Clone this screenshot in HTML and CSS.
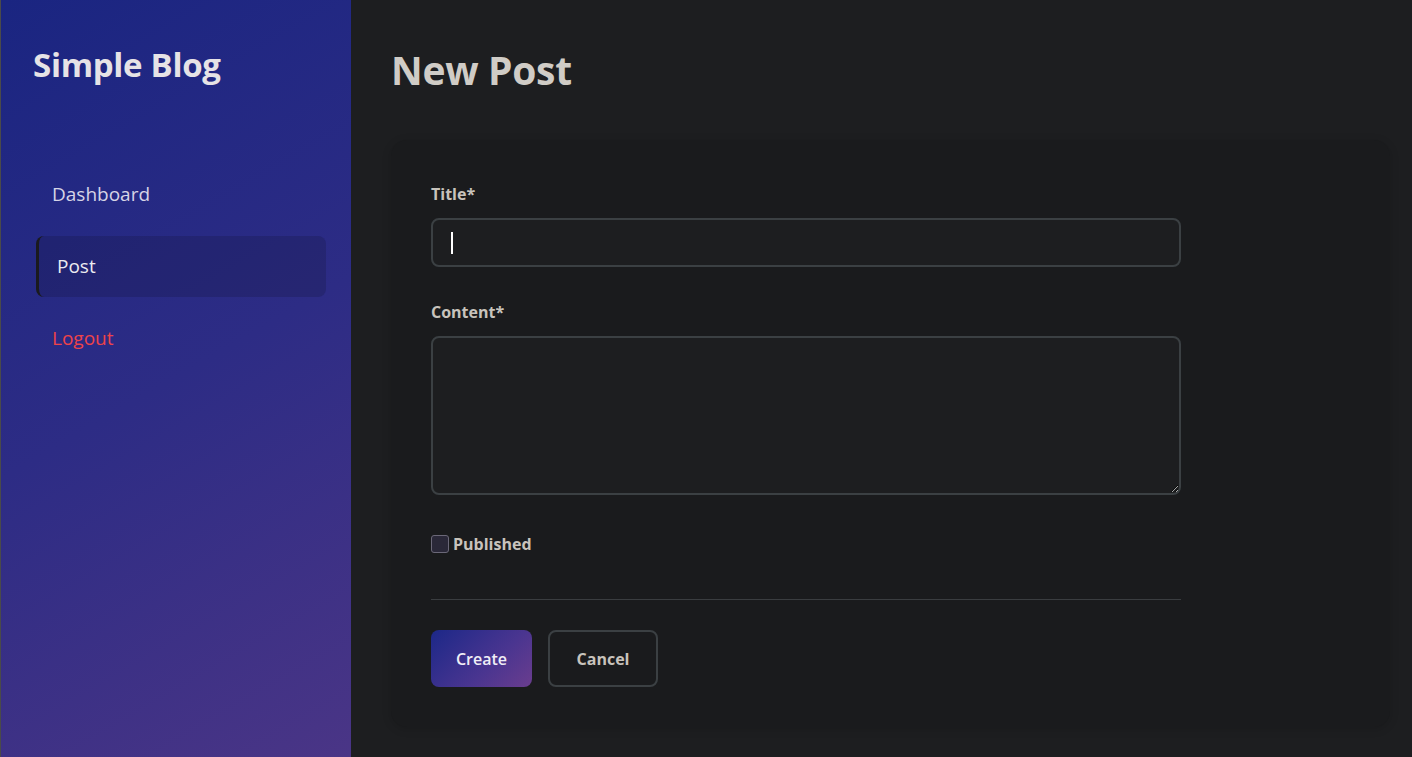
FILE: index.html
```html
<!DOCTYPE html>
<html lang="en">
<head>
<meta charset="utf-8">
<title>Simple Blog - New Post</title>
<link rel="stylesheet" href="styles.css">
</head>
<body>
<div class="app">
  <aside class="sidebar">
    <h1 class="brand">Simple Blog</h1>
    <nav class="nav">
      <a class="nav-item" href="#">Dashboard</a>
      <a class="nav-item active" href="#">Post</a>
      <a class="nav-item logout" href="#">Logout</a>
    </nav>
  </aside>
  <main class="main">
    <h2 class="page-title">New Post</h2>
    <section class="card">
      <form class="form">
        <div class="field">
          <label class="label" for="title">Title*</label>
          <input class="input input-focused" id="title" type="text" autofocus>
        </div>
        <div class="field">
          <label class="label" for="content">Content*</label>
          <textarea class="input textarea" id="content"></textarea>
        </div>
        <div class="check-row">
          <input class="checkbox" id="published" type="checkbox">
          <label class="label check-label" for="published">Published</label>
        </div>
        <div class="actions">
          <button class="btn btn-primary" type="button">Create</button>
          <button class="btn btn-outline" type="button">Cancel</button>
        </div>
      </form>
    </section>
  </main>
</div>
</body>
</html>
```
FILE: styles.css
```css
* { box-sizing: border-box; }
html, body { height: 100%; }
body {
  margin: 0;
  background: #1d1e20;
  font-family: "Open Sans", "Noto Sans", sans-serif;
  color: #d0ccc6;
}
.app {
  display: flex;
  min-height: 100vh;
}
.sidebar {
  width: 351px;
  flex-shrink: 0;
  border-left: 1px solid #4a4a4a;
  background: linear-gradient(150deg, #1a2581 0%, #2d2c85 50%, #4a3586 100%);
  padding: 40px 25px 0 35px;
}
.brand {
  margin: 0 0 0 -3px;
  font-size: 33px;
  line-height: 50px;
  font-weight: 700;
  color: #e6e3e6;
  letter-spacing: -0.3px;
}
.nav {
  display: flex;
  flex-direction: column;
  gap: 11px;
  margin-top: 74px;
}
.nav-item {
  display: block;
  height: 61px;
  line-height: 61px;
  padding: 0 16px;
  border-radius: 8px;
  font-size: 19px;
  font-weight: 500;
  color: #d6d4e6;
  text-decoration: none;
}
.nav-item.active {
  background: rgba(20, 20, 60, 0.25);
  border-left: 3px solid #1a1a1e;
  padding-left: 18px;
  color: #ecebf0;
}
.nav-item.logout { color: #ee4349; }

.main {
  flex: 1;
  padding: 40px 22px 27px 40px;
}
.page-title {
  margin: 0 0 40px;
  font-size: 39px;
  line-height: 60px;
  font-weight: 700;
  color: #d0ccc6;
  letter-spacing: -0.3px;
}
.card {
  max-width: 1000px;
  background: #1a1b1d;
  border-radius: 16px;
  padding: 42px 40px 40px;
  box-shadow: 0 2px 10px rgba(0,0,0,0.15);
}
.form {
  max-width: 750px;
  display: flex;
  flex-direction: column;
}
.field {
  display: flex;
  flex-direction: column;
  margin-bottom: 33px;
}
.label {
  font-size: 16px;
  font-weight: 700;
  color: #c8c3bc;
  line-height: 24px;
  margin-bottom: 12px;
}
.input {
  display: block;
  width: 100%;
  height: 49px;
  background: #1d1e20;
  border: 2px solid #3b4043;
  border-radius: 8px;
  padding: 0 18px;
  font: inherit;
  font-size: 16px;
  color: #e0e0e0;
  caret-color: #ffffff;
  outline: none;
}
.input-focused {
  background-image: linear-gradient(#ffffff, #ffffff);
  background-repeat: no-repeat;
  background-size: 2px 22px;
  background-position: 18px 12px;
}
.textarea {
  height: 159px;
  resize: vertical;
  padding: 12px 18px;
}
.check-row {
  display: flex;
  align-items: center;
  gap: 4px;
  margin-top: 4px;
  padding-bottom: 43px;
  border-bottom: 1px solid #3a3d40;
}
.checkbox {
  appearance: none;
  width: 18px;
  height: 18px;
  margin: 0;
  border: 1px solid #6b6878;
  border-radius: 3px;
  background: #2a2838;
}
.check-label { margin: 0; }
.actions {
  display: flex;
  gap: 16px;
  margin-top: 30px;
}
.btn {
  height: 57px;
  border-radius: 8px;
  font: inherit;
  font-size: 16px;
  font-weight: 600;
  cursor: pointer;
}
.btn-primary {
  width: 101px;
  border: none;
  color: #f0eef6;
  background: linear-gradient(135deg, #1c2888 0%, #4a3590 60%, #6a3d8e 100%);
}
.btn-outline {
  width: 110px;
  background: transparent;
  border: 2px solid #3b4043;
  color: #c8c3bc;
  font-weight: 700;
}
```
